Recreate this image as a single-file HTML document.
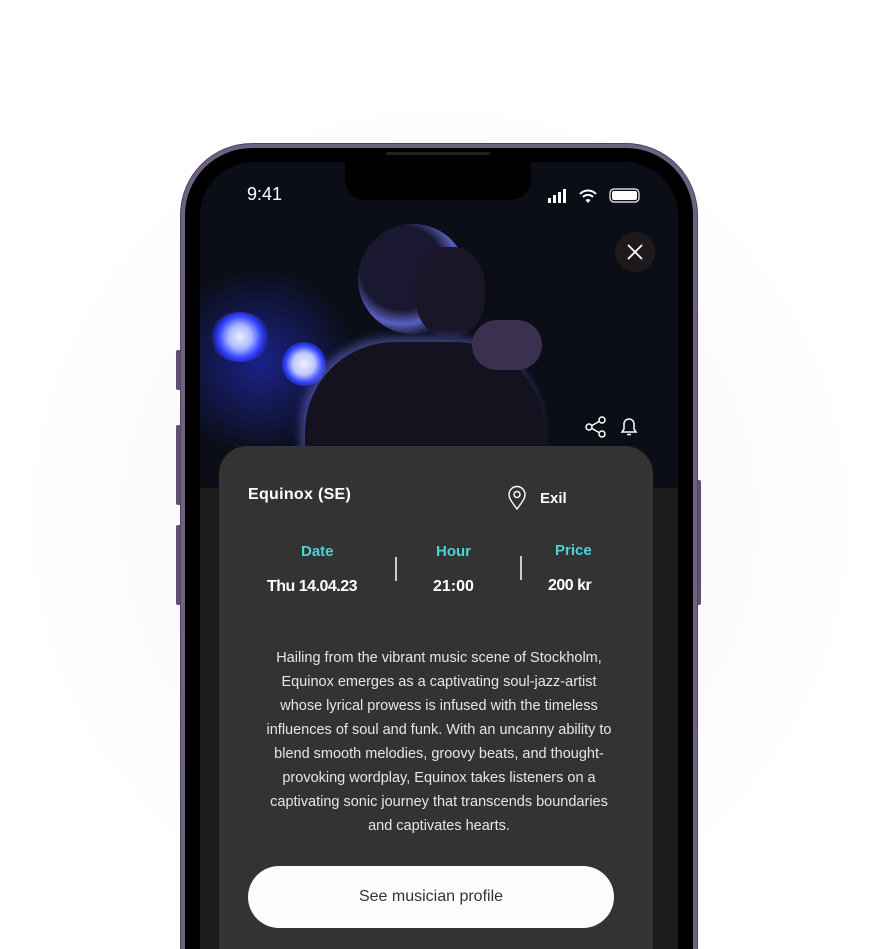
<!DOCTYPE html>
<html style="width:870px;height:949px;overflow:hidden"><head><style>
*{margin:0;padding:0;box-sizing:border-box}
body{width:870px;height:949px;overflow:hidden;background:radial-gradient(ellipse 420px 420px at 440px 520px,#f7eefa 0%,#fcf8fd 60%,#fff 100%);font-family:"Liberation Sans",sans-serif;position:relative}
.btn{position:absolute;background:#5d5070;border-radius:2px}
.frame{position:absolute;left:180px;top:143px;width:518px;height:806px;border-radius:72px 72px 0 0;background:#6e6280;border:1px solid #4f4560;border-bottom:none}
.bezel{position:absolute;left:185px;top:148px;width:508px;height:801px;border-radius:67px 67px 0 0;background:#000}
.screen{position:absolute;left:200px;top:162px;width:478px;height:787px;border-radius:54px 54px 0 0;background:#1c1c1c;overflow:hidden}
.photo{position:absolute;left:0;top:0;width:478px;height:326px;background:#0b0e16;overflow:hidden}
.notch{position:absolute;left:345px;top:160px;width:186px;height:40px;background:#000;border-radius:0 0 20px 20px}
.card{position:absolute;left:219px;top:446px;width:434px;height:503px;background:#333;border-radius:28px 28px 0 0}
.t{position:absolute;color:#fff}
</style></head><body>
<div class="btn" style="left:176px;top:350px;width:5px;height:40px"></div>
<div class="btn" style="left:176px;top:425px;width:5px;height:80px"></div>
<div class="btn" style="left:176px;top:525px;width:5px;height:80px"></div>
<div class="btn" style="left:696px;top:480px;width:5px;height:125px"></div>
<div class="frame"></div>
<div class="bezel"></div>
<div class="screen">
 <div class="photo">
  <div style="position:absolute;left:-40px;top:110px;width:200px;height:180px;border-radius:50%;background:radial-gradient(circle,rgba(40,50,230,.55),rgba(10,10,80,0) 70%)"></div>
  <div style="position:absolute;left:10px;top:150px;width:60px;height:50px;border-radius:50%;background:radial-gradient(circle,#eef 0%,#aab8ff 30%,#3040ff 55%,rgba(20,20,200,0) 75%)"></div>
  <div style="position:absolute;left:82px;top:180px;width:44px;height:44px;border-radius:50%;background:radial-gradient(circle,#eef 0%,#c0c8ff 35%,#3040ff 60%,rgba(20,20,200,0) 80%)"></div>
  <div style="position:absolute;left:158px;top:62px;width:110px;height:110px;border-radius:50%;background:radial-gradient(circle at 40% 40%,#1a1830 45%,#5a60c0 60%,rgba(20,20,60,0) 75%)"></div>
  <div style="position:absolute;left:215px;top:85px;width:70px;height:90px;border-radius:45%;background:#1a1628"></div>
  <div style="position:absolute;left:105px;top:180px;width:240px;height:200px;border-radius:90px 90px 0 0;background:#14121f;box-shadow:-4px -4px 10px rgba(120,130,255,.5)"></div>
  <div style="position:absolute;left:272px;top:158px;width:70px;height:50px;border-radius:30px;background:#3a3050"></div>
  <div style="position:absolute;left:415px;top:70px;width:40px;height:40px;border-radius:50%;background:#1e1a1c"></div>
  <svg style="position:absolute;left:425px;top:80px" width="20" height="20"><path d="M3 3L17 17M17 3L3 17" stroke="#fff" stroke-width="1.8"/></svg>
  <svg style="position:absolute;left:384px;top:253px" width="24" height="24" fill="none" stroke="#fff" stroke-width="1.5"><circle cx="18" cy="5" r="3"/><circle cx="5" cy="12" r="3"/><circle cx="18" cy="19" r="3"/><path d="M8 10.5L15 6.5M8 13.5L15 17.5"/></svg>
  <svg style="position:absolute;left:418px;top:253px" width="22" height="24" fill="none" stroke="#fff" stroke-width="1.5"><path d="M4 17h14l-2-3V9a5 5 0 0 0-10 0v5z M9 19.5h4"/></svg>
 </div>
</div>
<div class="notch"></div>
<div style="position:absolute;left:386px;top:152px;width:104px;height:3px;background:#222;border-radius:2px"></div>
<div class="t" style="left:247px;top:184px;font-size:18px">9:41</div>
<svg style="position:absolute;left:547px;top:187px" width="96" height="18"><rect x="1" y="11" width="3" height="5" fill="#fff"/><rect x="6" y="8" width="3" height="8" fill="#fff"/><rect x="11" y="5" width="3" height="11" fill="#fff"/><rect x="16" y="2" width="3" height="14" fill="#fff"/>
<path d="M33 7a11 11 0 0 1 16 0M36 10a7 7 0 0 1 10 0" stroke="#fff" stroke-width="2" fill="none"/><path d="M38.5 13l2.5 3 2.5-3a3.5 3.5 0 0 0-5 0z" fill="#fff"/>
<rect x="63" y="2" width="29" height="13" rx="4" fill="none" stroke="#fff" stroke-width="1.2"/><rect x="65" y="4" width="25" height="9" rx="2" fill="#fff"/></svg>
<div class="card"></div>
<div class="t" style="left:248px;top:486px;font-size:16px;font-weight:bold;letter-spacing:.3px">Equinox (SE)</div>
<svg style="position:absolute;left:506px;top:485px" width="22" height="26" fill="none" stroke="#fff" stroke-width="1.4"><path d="M11 24C5 16 3 13 3 9.5a8 8 0 0 1 16 0C19 13 17 16 11 24z"/><circle cx="11" cy="9.5" r="3"/></svg>
<div class="t" style="left:540px;top:490px;font-size:15px;font-weight:bold">Exil</div>
<div class="t" style="left:301px;top:543px;font-size:15px;font-weight:bold;color:#4fd1d6">Date</div>
<div class="t" style="left:436px;top:543px;font-size:15px;font-weight:bold;color:#4fd1d6">Hour</div>
<div class="t" style="left:555px;top:542px;font-size:15px;font-weight:bold;color:#4fd1d6">Price</div>
<div style="position:absolute;left:395px;top:557px;width:2px;height:24px;background:#ccc"></div>
<div style="position:absolute;left:520px;top:556px;width:2px;height:24px;background:#ccc"></div>
<div class="t" style="left:267px;top:578px;font-size:16px;font-weight:bold;letter-spacing:-.5px">Thu 14.04.23</div>
<div class="t" style="left:433px;top:578px;font-size:16px;font-weight:bold">21:00</div>
<div class="t" style="left:548px;top:577px;font-size:16px;font-weight:bold;letter-spacing:-.5px">200 kr</div>
<div class="t" style="left:219px;top:646px;width:440px;text-align:center;font-size:14.5px;line-height:24px;color:#e6e6e6">Hailing from the vibrant music scene of Stockholm,<br>Equinox emerges as a captivating soul-jazz-artist<br>whose lyrical prowess is infused with the timeless<br>influences of soul and funk. With an uncanny ability to<br>blend smooth melodies, groovy beats, and thought-<br>provoking wordplay, Equinox takes listeners on a<br>captivating sonic journey that transcends boundaries<br>and captivates hearts.</div>
<div style="position:absolute;left:248px;top:866px;width:366px;height:62px;border-radius:31px;background:#fcfcfc;color:#333;font-size:16px;text-align:center;line-height:62px">See musician profile</div>
</body></html>
